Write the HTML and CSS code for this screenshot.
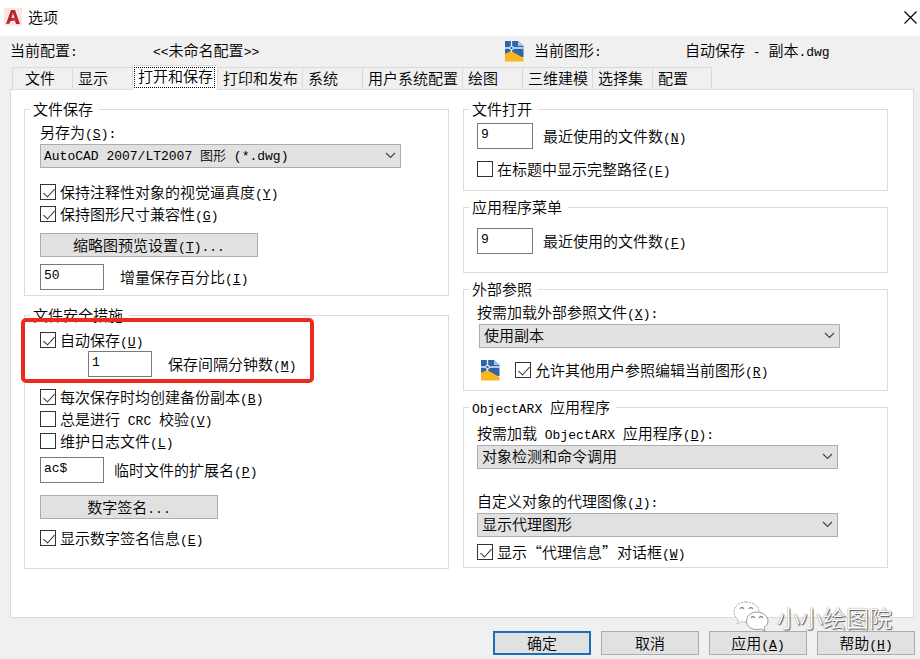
FILE: index.html
```html
<!doctype html>
<html lang="zh-CN">

<head>
  <meta charset="UTF-8" />
  <meta name="viewport" content="width=device-width, initial-scale=1.0" />
  <title>选项</title>
  <link rel="stylesheet" href="styles.css">
</head>

<body>
  <!-- Shared symbols -->
  <svg class="symbols" aria-hidden="true">
    <symbol id="chevron" viewBox="0 0 11 7">
      <path d="M1 1l4.5 4.5L10 1" fill="none" stroke="#444" stroke-width="1.2" />
    </symbol>
    <symbol id="drawing" viewBox="0 0 19 21">
      <path d="M0 0h13l5.500 5v11H0z" fill="#2f66ab" />
      <path d="M13 0l5.500 5H13z" fill="#a9c3df" />
      <path d="M0 13l6-3 12.500 7v3.500H0z" fill="#f9b71d" />
      <path d="M0 7h18.500M6.500 0v11" stroke="#e3edf7" stroke-width="1.300" />
      <circle cx="6.500" cy="7" r="1.800" fill="#2f66ab" stroke="#fff" />
    </symbol>
  </svg>

  <header class="title-bar">
    <svg class="app-icon" viewBox="0 0 18 18" aria-hidden="true">
      <rect width="18" height="18" fill="#fbe6e4" />
      <path d="M2 16L7 2h4l5 14h-4l-1-3H6.500L5 16z" fill="#b7272d" />
      <path d="M9 5l1.500 5h-3z" fill="#fbe6e4" />
      <path d="M2 16l9-6 1 3H6.500L5 16z" fill="#d5443f" />
    </svg>
    <h1 class="title">选项</h1>
    <button class="close" type="button" aria-label="关闭">
      <svg viewBox="0 0 13 13" aria-hidden="true"><path d="M.5.5l12 12m0-12l-12 12" stroke="#000" stroke-width="1.200" /></svg>
    </button>
  </header>

  <div class="profile">
    <span>当前配置<span class="latin">:</span></span>
    <span><span class="latin">&lt;&lt;</span>未命名配置<span class="latin">&gt;&gt;</span></span>
    <svg class="drawing-icon" aria-hidden="true"><use href="#drawing" /></svg>
    <span>当前图形<span class="latin">:</span></span>
    <span>自动保存<span class="latin"> - </span>副本<span class="latin">.dwg</span></span>
  </div>

  <main class="main">
    <div class="tabs" role="tablist">
      <button class="tab tab-first" type="button" role="tab">文件</button>
      <button class="tab" type="button" role="tab">显示</button>
      <button class="tab tab-active" type="button" role="tab" aria-selected="true">打开和保存</button>
      <button class="tab" type="button" role="tab">打印和发布</button>
      <button class="tab" type="button" role="tab">系统</button>
      <button class="tab" type="button" role="tab">用户系统配置</button>
      <button class="tab" type="button" role="tab">绘图</button>
      <button class="tab" type="button" role="tab">三维建模</button>
      <button class="tab" type="button" role="tab">选择集</button>
      <button class="tab" type="button" role="tab">配置</button>
    </div>

    <div class="panel" role="tabpanel">
      <div class="column column-left">
        <fieldset class="group">
          <legend>文件保存</legend>
          <div class="group-body save-body">
            <label class="caption" for="save-as">另存为<span class="latin">(<u>S</u>):</span></label>
            <div class="select">
              <select id="save-as" class="select-latin">
                <option>AutoCAD 2007/LT2007 图形 (*.dwg)</option>
              </select>
              <svg class="chevron" aria-hidden="true"><use href="#chevron" /></svg>
            </div>
            <div class="checks">
              <label class="check"><input type="checkbox" checked><span>保持注释性对象的视觉逼真度<span class="latin">(<u>Y</u>)</span></span></label>
              <label class="check"><input type="checkbox" checked><span>保持图形尺寸兼容性<span class="latin">(<u>G</u>)</span></span></label>
            </div>
            <button class="button thumbnail-button" type="button">缩略图预览设置<span class="latin">(<u>T</u>)...</span></button>
            <div class="field percent-field">
              <input class="text-box" id="percent" type="text" value="50">
              <label for="percent">增量保存百分比<span class="latin">(<u>I</u>)</span></label>
            </div>
          </div>
        </fieldset>

        <fieldset class="group">
          <legend>文件安全措施</legend>
          <div class="group-body safety-body">
            <div class="autosave">
              <label class="check"><input type="checkbox" checked><span>自动保存<span class="latin">(<u>U</u>)</span></span></label>
              <div class="field minutes-field">
                <input class="text-box" id="minutes" type="text" value="1">
                <label for="minutes">保存间隔分钟数<span class="latin">(<u>M</u>)</span></label>
              </div>
            </div>
            <label class="check"><input type="checkbox" checked><span>每次保存时均创建备份副本<span class="latin">(<u>B</u>)</span></span></label>
            <label class="check"><input type="checkbox"><span>总是进行<span class="latin"> CRC </span>校验<span class="latin">(<u>V</u>)</span></span></label>
            <label class="check"><input type="checkbox"><span>维护日志文件<span class="latin">(<u>L</u>)</span></span></label>
            <div class="field extension-field">
              <input class="text-box" id="extension" type="text" value="ac$">
              <label for="extension">临时文件的扩展名<span class="latin">(<u>P</u>)</span></label>
            </div>
            <button class="button signature-button" type="button">数字签名<span class="latin">...</span></button>
            <label class="check"><input type="checkbox" checked><span>显示数字签名信息<span class="latin">(<u>E</u>)</span></span></label>
          </div>
        </fieldset>
      </div>

      <div class="column column-right">
        <fieldset class="group">
          <legend>文件打开</legend>
          <div class="group-body open-body">
            <div class="field">
              <input class="text-box text-box-small" id="recent-files" type="text" value="9">
              <label for="recent-files">最近使用的文件数<span class="latin">(<u>N</u>)</span></label>
            </div>
            <label class="check"><input type="checkbox"><span>在标题中显示完整路径<span class="latin">(<u>F</u>)</span></span></label>
          </div>
        </fieldset>

        <fieldset class="group">
          <legend>应用程序菜单</legend>
          <div class="group-body menu-body">
            <div class="field">
              <input class="text-box text-box-small" id="menu-files" type="text" value="9">
              <label for="menu-files">最近使用的文件数<span class="latin">(<u>F</u>)</span></label>
            </div>
          </div>
        </fieldset>

        <fieldset class="group">
          <legend>外部参照</legend>
          <div class="group-body xref-body">
            <label class="caption" for="xref">按需加载外部参照文件<span class="latin">(<u>X</u>):</span></label>
            <div class="select">
              <select id="xref">
                <option>使用副本</option>
              </select>
              <svg class="chevron" aria-hidden="true"><use href="#chevron" /></svg>
            </div>
            <div class="xref-edit">
              <svg class="drawing-icon" aria-hidden="true"><use href="#drawing" /></svg>
              <label class="check"><input type="checkbox" checked><span>允许其他用户参照编辑当前图形<span class="latin">(<u>R</u>)</span></span></label>
            </div>
          </div>
        </fieldset>

        <fieldset class="group">
          <legend><span class="latin">ObjectARX </span>应用程序</legend>
          <div class="group-body arx-body">
            <label class="caption" for="arx">按需加载<span class="latin"> ObjectARX </span>应用程序<span class="latin">(<u>D</u>):</span></label>
            <div class="select">
              <select id="arx">
                <option>对象检测和命令调用</option>
              </select>
              <svg class="chevron" aria-hidden="true"><use href="#chevron" /></svg>
            </div>
            <label class="caption proxy-caption" for="proxy">自定义对象的代理图像<span class="latin">(<u>J</u>):</span></label>
            <div class="select">
              <select id="proxy">
                <option>显示代理图形</option>
              </select>
              <svg class="chevron" aria-hidden="true"><use href="#chevron" /></svg>
            </div>
            <label class="check"><input type="checkbox" checked><span>显示“代理信息”对话框<span class="latin">(<u>W</u>)</span></span></label>
          </div>
        </fieldset>
      </div>
    </div>
  </main>

  <footer class="actions">
    <button class="button button-default" type="button">确定</button>
    <button class="button" type="button">取消</button>
    <button class="button" type="button">应用<span class="latin">(<u>A</u>)</span></button>
    <button class="button" type="button">帮助<span class="latin">(<u>H</u>)</span></button>
    <div class="watermark">
      <svg class="wechat" viewBox="0 0 36 31" aria-hidden="true">
        <path d="M13 1C6 1 1 5.500 1 11c0 3.500 2 6 4.500 8L4 23l5-2.500c1.500.5 3 .5 5 .5C20 21 26 17 26 11S20 1 13 1z" fill="#fff" stroke="#aaa" stroke-dasharray="2 1" />
        <path d="M24 11c-6 0-10.500 4-10.500 9S18 28.500 24 28.500c1.500 0 3 0 4-.5l4 2-1-3.500c2.500-1.500 4-4 4-6.500 0-5-5-9-11-9z" fill="#fff" stroke="#999" />
        <path d="M7 8q2-3 4 0M16 8q2-3 4 0M18 17q2-3 4 0M26 17q2-3 4 0" fill="none" stroke="#888" stroke-width="1.300" />
      </svg>
      <span>小小绘图院</span>
    </div>
  </footer>
</body>

</html>
```
FILE: styles.css
```css
* {
  box-sizing: border-box;
}

body {
  display: flex;
  flex-direction: column;
  min-height: 100vh;
  margin: 0;
  background-color: #f0f0f0;
  color: #000;
  font-family: "Noto Sans CJK SC", sans-serif;
  font-size: 15px;
  font-weight: 350;
  line-height: 20px;
}

button,
input,
select {
  margin: 0;
  color: inherit;
  font: inherit;
}

.symbols {
  display: none;
}

/* Half-width characters sit in a monospaced face */
.latin {
  font-family: "Liberation Mono", monospace;
  font-size: 13px;
  line-height: 1;
  white-space: pre;
}

/* Title bar */
.title-bar {
  display: flex;
  align-items: center;
  height: 36px;
  padding: 0 3px 2px 4px;
  background-color: #fff;
}

.app-icon {
  width: 18px;
  height: 18px;
}

.title {
  flex: 1;
  margin: 0 0 0 6px;
  font-size: 15px;
  font-weight: 350;
}

.close {
  display: flex;
  padding: 0;
  border: none;
  background: none;
}

.close svg {
  width: 13px;
  height: 13px;
}

.profile {
  display: grid;
  grid-template-columns: 143px 352px 29px 151px 1fr;
  align-items: center;
  height: 30px;
  padding: 0 0 3px 10px;
}

.drawing-icon {
  width: 19px;
  height: 21px;
}

.profile .drawing-icon {
  margin-top: 3px;
}

/* Tabs */
.main {
  display: flex;
  flex: 1;
  flex-direction: column;
  margin: 0 6px 0 10px;
}

.tabs {
  display: flex;
  align-items: flex-end;
  height: 23px;
  padding-left: 2px;
}

.tab {
  min-width: 60px;
  height: 22px;
  padding: 0 4px 2px 5px;
  border: solid #d9d9d9;
  border-width: 1px 0 0 1px;
  background-color: #f0f0f0;
  line-height: 18px;
  text-align: left;
  white-space: nowrap;
}

.tab:last-child {
  border-right-width: 1px;
}

.tab-first {
  padding-right: 10px;
  text-align: center;
}

.tab-active {
  z-index: 1;
  height: 25px;
  margin-bottom: -1px;
  padding-bottom: 5px;
  background-color: #fff;
  outline: 1px dotted #000;
  outline-offset: -3px;
}

.panel {
  display: grid;
  flex: 1;
  grid-template-columns: 1fr 1fr;
  gap: 14px;
  align-items: start;
  padding: 9px 25px 16px 13px;
  border: 1px solid #dcdcdc;
  background-color: #fff;
}

.column {
  display: flex;
  flex-direction: column;
}

.column-left {
  gap: 9px;
}

.column-right {
  gap: 6px;
}

/* Groups */
.group {
  min-width: 0;
  margin: 0;
  padding: 0;
  border: 1px solid #dcdcdc;
}

.group legend {
  height: 20px;
  margin-left: 5px;
  padding: 0 6px 0 3px;
}

.group-body {
  display: flex;
  flex-direction: column;
  align-items: flex-start;
  padding: 0 13px;
}

.column-left .group-body {
  padding: 0 15px;
}

.caption {
  height: 22px;
  line-height: 20px;
}

.select {
  position: relative;
  width: 100%;
  max-width: 361px;
}

.select select {
  display: block;
  width: 100%;
  height: 24px;
  padding: 0 24px 2px 4px;
  border: 1px solid #adadad;
  border-radius: 0;
  background-color: #e1e1e1;
  appearance: none;
}

.select .select-latin {
  padding: 2px 24px 0 3px;
  font-family: "Liberation Mono", "Noto Sans CJK SC", monospace;
  font-size: 13px;
}

.chevron {
  position: absolute;
  top: 8px;
  right: 5px;
  width: 11px;
  height: 7px;
  pointer-events: none;
}

.check {
  display: flex;
  align-items: center;
  gap: 4px;
  height: 22px;
  white-space: nowrap;
}

.check input {
  position: relative;
  width: 16px;
  height: 16px;
  border: 1px solid #333;
  background-color: #fff;
  appearance: none;
}

.check input:checked::before {
  position: absolute;
  top: 1px;
  left: 5px;
  width: 5px;
  height: 10px;
  border: solid #333;
  border-width: 0 1px 1px 0;
  content: "";
  transform: rotate(42deg);
}

.field {
  display: flex;
  align-items: center;
  gap: 10px;
  white-space: nowrap;
}

.text-box {
  width: 64px;
  height: 26px;
  padding: 0 3px 4px;
  border: 1px solid #7a7a7a;
  background-color: #fff;
  font-family: "Liberation Mono", monospace;
  font-size: 13px;
}

.text-box-small {
  width: 56px;
}

.button {
  height: 24px;
  padding: 0 8px;
  border: 1px solid #adadad;
  background-color: #e1e1e1;
  line-height: 20px;
  white-space: nowrap;
}

/* File save */
.group .save-body {
  padding-top: 3px;
  padding-bottom: 5px;
}

.checks {
  margin: 13px 0 8px;
}

.thumbnail-button {
  width: 218px;
}

.percent-field {
  gap: 16px;
  margin-top: 7px;
}

/* File safety */
.group .safety-body {
  padding-top: 4px;
  padding-bottom: 19px;
}

.autosave {
  position: relative;
  margin-bottom: 9px;
}

.autosave::after {
  position: absolute;
  inset: -11px -18px -6px -19px;
  border: 4px solid #ee2a1d;
  border-radius: 5px;
  content: "";
  pointer-events: none;
}

.minutes-field {
  gap: 16px;
  padding-left: 48px;
}

.extension-field {
  margin: 5px 0 12px;
}

.signature-button {
  width: 178px;
  margin-bottom: 8px;
}

/* Right column */
.group .open-body {
  gap: 9px;
  padding-top: 4px;
  padding-bottom: 10px;
}

.group .menu-body {
  padding-top: 11px;
  padding-bottom: 18px;
}

.group .xref-body {
  padding-top: 3px;
  padding-bottom: 9px;
}

.xref-body .select {
  margin: 0 2px;
}

.xref-edit {
  display: flex;
  align-items: center;
  gap: 15px;
  margin-top: 11px;
  padding-left: 4px;
}

.group .arx-body {
  padding-top: 6px;
  padding-bottom: 4px;
}

.proxy-caption {
  margin-top: 22px;
}

.arx-body .check {
  margin-top: 4px;
}

/* Dialog buttons */
.actions {
  position: relative;
  display: flex;
  justify-content: flex-end;
  gap: 10px;
  padding: 13px 5px 4px;
}

.actions .button {
  width: 98px;
}

.actions .button-default {
  border: 2px solid #1a6fb8;
}

.watermark {
  position: absolute;
  right: 28px;
  bottom: 27px;
  display: flex;
  align-items: center;
  gap: 8px;
  color: #fff;
  font-size: 23px;
  line-height: 24px;
  text-shadow: 1px 1px 1px #555, 0 0 1px #777;
  pointer-events: none;
}

.wechat {
  width: 36px;
  height: 31px;
}
```
